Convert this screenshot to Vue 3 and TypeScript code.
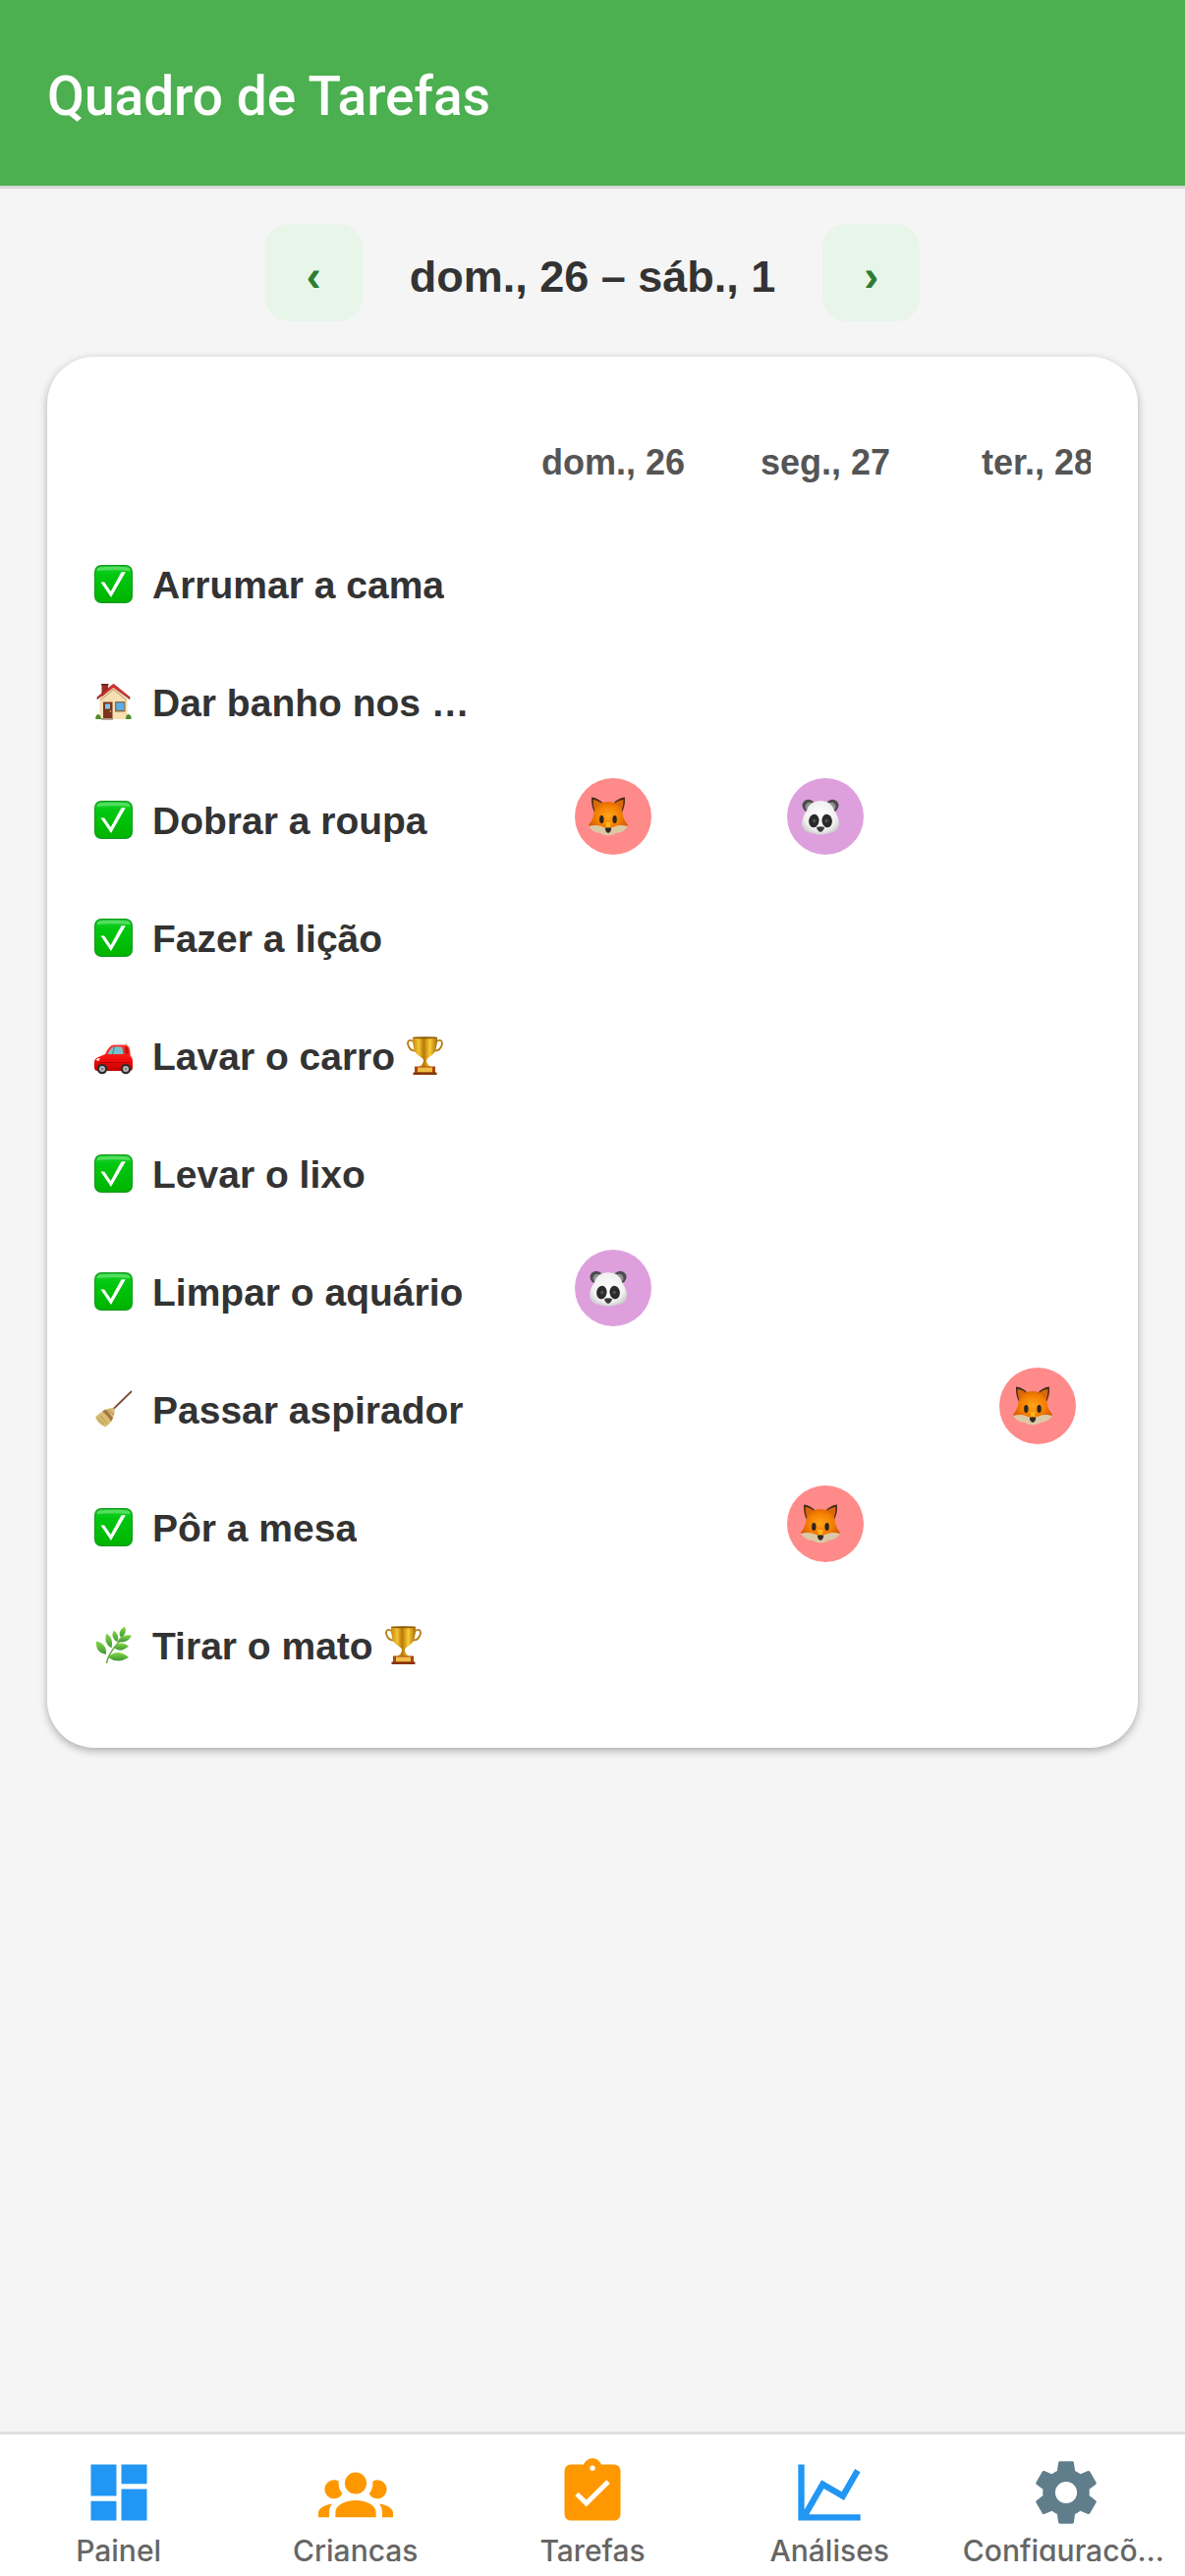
<script setup lang="ts">
import { ref } from 'vue'

type Child = 'fox' | 'panda'
type Glyph = 'check' | 'house' | 'car' | 'broom' | 'herb'

interface Task {
  name: string
  glyph: Glyph
  bonus?: boolean
  days: (Child | null)[]
}

interface Tab {
  label: string
  color: string
  path: string
}

const days = ['dom., 26', 'seg., 27', 'ter., 28']
const weekLabel = ref('dom., 26 – sáb., 1')

const tasks: Task[] = [
  { name: 'Arrumar a cama', glyph: 'check', days: [null, null, null] },
  { name: 'Dar banho nos cachorros', glyph: 'house', days: [null, null, null] },
  { name: 'Dobrar a roupa', glyph: 'check', days: ['fox', 'panda', null] },
  { name: 'Fazer a lição', glyph: 'check', days: [null, null, null] },
  { name: 'Lavar o carro', glyph: 'car', bonus: true, days: [null, null, null] },
  { name: 'Levar o lixo', glyph: 'check', days: [null, null, null] },
  { name: 'Limpar o aquário', glyph: 'check', days: ['panda', null, null] },
  { name: 'Passar aspirador', glyph: 'broom', days: [null, null, 'fox'] },
  { name: 'Pôr a mesa', glyph: 'check', days: [null, 'fox', null] },
  { name: 'Tirar o mato', glyph: 'herb', bonus: true, days: [null, null, null] },
]

const tabs: Tab[] = [
  {
    label: 'Painel',
    color: '#2196f3',
    path: 'M3 3h8.2v10.1H3zM3 14.8h8.2V21H3zM12.8 3H21v6.2h-8.2zM12.8 10.9H21V21h-8.2z',
  },
  {
    label: 'Crianças',
    color: '#ff9800',
    path: 'M12,5.5A3.5,3.5 0 0,1 15.5,9A3.5,3.5 0 0,1 12,12.5A3.5,3.5 0 0,1 8.5,9A3.5,3.5 0 0,1 12,5.5M5,8C5.56,8 6.08,8.15 6.53,8.42C6.38,9.85 6.8,11.27 7.66,12.38C7.16,13.34 6.16,14 5,14A3,3 0 0,1 2,11A3,3 0 0,1 5,8M19,8A3,3 0 0,1 22,11A3,3 0 0,1 19,14C17.84,14 16.84,13.34 16.34,12.38C17.2,11.27 17.62,9.85 17.47,8.42C17.92,8.15 18.44,8 19,8M5.5,18.25C5.5,16.18 8.41,14.5 12,14.5C15.59,14.5 18.5,16.18 18.5,18.25V20H5.5V18.25M0,20V18.5C0,17.11 1.89,15.94 4.45,15.6C3.86,16.28 3.5,17.22 3.5,18.25V20H0M24,20H20.5V18.25C20.5,17.22 20.14,16.28 19.55,15.6C22.11,15.94 24,17.11 24,18.5V20Z',
  },
  {
    label: 'Tarefas',
    color: '#ff9800',
    path: 'M19 3h-4.18C14.4 1.84 13.3 1 12 1s-2.4.84-2.82 2H5a2 2 0 0 0-2 2v14a2 2 0 0 0 2 2h14a2 2 0 0 0 2-2V5a2 2 0 0 0-2-2zM12 3.3a.85.85 0 1 1 0 1.7.85.85 0 0 1 0-1.7zM10 16.6l-3.6-3.6 1.1-1.1 2.5 2.5 6.5-6.45 1.1 1.1z',
  },
  {
    label: 'Análises',
    color: '#2196f3',
    path: 'M16,11.78L20.24,4.45L21.97,5.45L16.74,14.5L10.23,10.75L5.46,19H22V21H2V3H4V17.54L9.5,8L16,11.78Z',
  },
  {
    label: 'Configurações',
    color: '#607d8b',
    path: 'M12,15.5A3.5,3.5 0 0,1 8.5,12A3.5,3.5 0 0,1 12,8.5A3.5,3.5 0 0,1 15.5,12A3.5,3.5 0 0,1 12,15.5M19.43,12.97C19.47,12.65 19.5,12.33 19.5,12C19.5,11.67 19.47,11.34 19.43,11L21.54,9.37C21.73,9.22 21.78,8.95 21.66,8.73L19.66,5.27C19.54,5.05 19.27,4.96 19.05,5.05L16.56,6.05C16.04,5.66 15.5,5.32 14.87,5.07L14.5,2.42C14.46,2.18 14.25,2 14,2H10C9.75,2 9.54,2.18 9.5,2.42L9.13,5.07C8.5,5.32 7.96,5.66 7.44,6.05L4.95,5.05C4.73,4.96 4.46,5.05 4.34,5.27L2.34,8.73C2.21,8.95 2.27,9.22 2.46,9.37L4.57,11C4.53,11.34 4.5,11.67 4.5,12C4.5,12.33 4.53,12.65 4.57,12.97L2.46,14.63C2.27,14.78 2.21,15.05 2.34,15.27L4.34,18.73C4.46,18.95 4.73,19.03 4.95,18.95L7.44,17.94C7.96,18.34 8.5,18.68 9.13,18.93L9.5,21.58C9.54,21.82 9.75,22 10,22H14C14.25,22 14.46,21.82 14.5,21.58L14.87,18.93C15.5,18.67 16.04,18.34 16.56,17.94L19.05,18.95C19.27,19.03 19.54,18.95 19.66,18.73L21.66,15.27C21.78,15.05 21.73,14.78 21.54,14.63L19.43,12.97Z',
  },
]
</script>

<template>
  <div class="app">
    <!-- Shared picture definitions -->
    <svg class="defs" aria-hidden="true">
      <defs>
        <linearGradient id="g-check" x1="0" y1="0" x2="0" y2="1">
          <stop offset="0" stop-color="#1fcf30" />
          <stop offset="0.25" stop-color="#00c80f" />
          <stop offset="1" stop-color="#00b400" />
        </linearGradient>
        <linearGradient id="g-gold" x1="0" y1="0" x2="1" y2="0">
          <stop offset="0" stop-color="#c8860c" />
          <stop offset="0.25" stop-color="#f4c430" />
          <stop offset="0.45" stop-color="#b87808" />
          <stop offset="0.7" stop-color="#f8cc38" />
          <stop offset="1" stop-color="#a86a04" />
        </linearGradient>
        <radialGradient id="g-fox" cx="0.5" cy="0.45" r="0.6">
          <stop offset="0" stop-color="#ffa41c" />
          <stop offset="0.5" stop-color="#f58200" />
          <stop offset="1" stop-color="#cf5200" />
        </radialGradient>
        <radialGradient id="g-panda" cx="0.5" cy="0.45" r="0.6">
          <stop offset="0" stop-color="#ffffff" />
          <stop offset="0.7" stop-color="#f0f0f0" />
          <stop offset="1" stop-color="#c8c8c8" />
        </radialGradient>
        <linearGradient id="g-leaf" x1="0" y1="0" x2="0" y2="1">
          <stop offset="0" stop-color="#86d848" />
          <stop offset="1" stop-color="#3c9632" />
        </linearGradient>
        <linearGradient id="g-car" x1="0" y1="0" x2="0" y2="1">
          <stop offset="0" stop-color="#ff3a30" />
          <stop offset="0.6" stop-color="#f20c0c" />
          <stop offset="1" stop-color="#c00000" />
        </linearGradient>

        <symbol id="s-check" viewBox="0 0 39 39">
          <rect width="39" height="39" rx="7" fill="#109c1c" />
          <rect x="1.2" y="1.2" width="36.6" height="36.6" rx="6" fill="url(#g-check)" />
          <path d="M5 2.600Q19.500 1 34 2.600Q37 4 36 6Q19 4.500 3 6Q2 4 5 2.600z" fill="#7be984" opacity="0.6" />
          <path d="M6.500 17.500h3.700l6.500 9.500L27.500 7.300h4.300L17 33z" fill="#fff" />
        </symbol>

        <symbol id="s-house" viewBox="0 0 39 39">
          <path d="M7.500 1.500h6.500v7l-6.500 6z" fill="#9c2c24" />
          <path d="M7 1h7.500v1.500H7z" fill="#6c2018" />
          <path d="M19.500 4.500L5.500 16.500V37h28V16.500z" fill="#f6dfb2" />
          <path d="M6 17L19.500 6 33 17v1.500L19.500 7.500 6 18.500z" fill="#c9a876" />
          <path d="M19.500 1.200L3 14.500v2.200L19.500 4.600 36 16.700v-2.200z" fill="#e0302a" stroke="#6a1a14" stroke-width="0.6" />
          <rect x="9" y="19.500" width="9.500" height="17.500" fill="#7a3420" />
          <rect x="11" y="21.500" width="5" height="5" fill="#7cc4f0" />
          <circle cx="16.500" cy="29" r="0.800" fill="#f4c860" />
          <rect x="21" y="19" width="10.500" height="10.500" fill="#8c6a48" />
          <rect x="22.300" y="20.300" width="8" height="7.500" fill="#58aee8" />
          <path d="M7 36h12v1.800H7z" fill="#a89888" />
          <path d="M1.300 37Q1 32.500 4 32Q6.500 32.500 7 37zM32 37Q32 32 35 32Q38 33 37.600 37z" fill="#4e8c2c" />
        </symbol>

        <symbol id="s-car" viewBox="0 0 39 39">
          <path d="M32 9l1-1.500" stroke="#444" stroke-width="0.800" />
          <path d="M0 26Q0 22.500 4 21L11 18Q15 9 19.500 8.500H31Q35 8.500 36 13l.8 7Q39 21.500 39 26v6Q39 35 36 35H3Q0 35 0 31z" fill="url(#g-car)" />
          <path d="M13.500 18Q16.500 11 20 10.500h7q2 0 2.500 7.500z" fill="#76c2cc" />
          <path d="M20.500 10.500l-2 7.500" stroke="#3c6c74" stroke-width="0.800" />
          <path d="M31 10.500h2.500l1.500 7h-3z" fill="#c40c0c" />
          <path d="M4 26.500h31" stroke="#b80000" stroke-width="1" />
          <path d="M1.500 24q1-2 4.500-2l-1.500 3z" fill="#fff3e0" />
          <circle cx="8" cy="33" r="5.200" fill="#2c2c2c" />
          <circle cx="8" cy="33" r="3" fill="#b8b8b8" />
          <circle cx="8" cy="33" r="1" fill="#666" />
          <circle cx="32" cy="33" r="5.200" fill="#2c2c2c" />
          <circle cx="32" cy="33" r="3" fill="#b8b8b8" />
          <circle cx="32" cy="33" r="1" fill="#666" />
        </symbol>

        <symbol id="s-trophy" viewBox="0 0 39 39">
          <path d="M8.500 5.500Q2 1.500 2 7.500Q3.500 14.500 9.500 14.500Q13 15 12 18M30.500 5.500Q37 1.500 37 7.500Q35.500 14.500 29.500 14.500Q26 15 27 18" fill="none" stroke="#b87c10" stroke-width="1.800" />
          <path d="M7 .8h25Q32.500 15 26 19.500Q21.500 22 21 24q-.3 4 5 7H13q5.300-3 5-7Q17.500 22 13 19.500Q6.500 15 7 .8z" fill="url(#g-gold)" />
          <ellipse cx="19.500" cy="1.200" rx="12.500" ry="1" fill="#8c5c08" />
          <path d="M9 30.500h21V37H9z" fill="#a8480c" />
          <path d="M12 31.500h15v5H12z" fill="#f0bc48" />
          <path d="M7.500 36.500h24V39h-24z" fill="#86340c" />
        </symbol>

        <symbol id="s-broom" viewBox="0 0 39 39">
          <path d="M37.500 1.500L19.500 19" stroke="#7c5038" stroke-width="1.800" stroke-linecap="round" />
          <path d="M20.500 18.500L17 18Q8 20 1 27.500Q4 35 11.500 37.500Q18 33 20.500 24z" fill="#d8bc72" />
          <path d="M8 21.500Q13 25 17 32l2-3.500Q15 22.500 11.500 19.800z" fill="#a47842" />
          <path d="M3 28l7 7M6 26l7 8M14 20l6 5" stroke="#a88848" stroke-width="0.800" />
        </symbol>

        <symbol id="s-herb" viewBox="0 0 39 39">
          <path d="M12.500 38Q14 27 30 11" fill="none" stroke="#62a83c" stroke-width="1.500" />
          <g fill="url(#g-leaf)">
            <path d="M12 29Q1 27 2 15.500Q13 18 12 29z" />
            <path d="M17.500 22.500Q8.500 17 12.500 7.500Q20 13 17.500 22.500z" />
            <path d="M23.500 16.500Q15.500 11 20 4.500Q26 9 23.500 16.500z" />
            <path d="M27 12Q23 5 31 .5Q34 8 27 12z" />
            <path d="M24 16Q26 8 38 9.500Q34 18 24 16z" />
            <path d="M19.500 22Q26 14 35 20.500Q27 28 19.500 22z" />
            <path d="M14 32Q23 22 35 32Q24 39 14 32z" />
          </g>
        </symbol>

        <symbol id="s-fox" viewBox="0 0 40 40">
          <path d="M3 .5Q10 1 15 7L6 16Q2.500 9 3 .5zM37 .5Q30 1 25 7l9 9Q37.500 9 37 .5z" fill="#4a2c18" />
          <path d="M4.500 3Q10 3.500 14.500 7.500L6.500 16Q4.500 9 4.500 3zM35.500 3Q30 3.500 25.500 7.500L33.500 16Q35.500 9 35.500 3z" fill="#d8680c" />
          <path d="M20 5Q28.500 5 32.500 11.500Q35 16 35.500 21Q37 25.500 40 29Q36 37 20 37T0 29Q3 25.500 4.500 21Q5 16 7.500 11.500Q11.500 5 20 5z" fill="url(#g-fox)" />
          <path d="M0 30Q8 28 14 30.500Q18 32 20 32t6-1.500q6-2.500 14-.5Q36 36.500 28 37Q24 39.500 20 39.500T12 37Q4 36.500 0 30z" fill="#dcc8a4" />
          <path d="M17.500 26h5l-.5 6h-4z" fill="#ffb41c" />
          <ellipse cx="13.300" cy="23" rx="2.200" ry="3.900" fill="#2c2420" />
          <ellipse cx="26.600" cy="23" rx="2.200" ry="3.900" fill="#2c2420" />
          <path d="M16.800 32q3.200-1.500 6.400 0Q23 36 20 37Q17 36 16.800 32z" fill="#302826" />
        </symbol>

        <symbol id="s-panda" viewBox="0 0 40 40">
          <circle cx="7.800" cy="9" r="6.300" fill="#4c4c4c" />
          <circle cx="32.200" cy="9" r="6.300" fill="#4c4c4c" />
          <circle cx="8.800" cy="10" r="4.300" fill="#909090" />
          <circle cx="31.200" cy="10" r="4.300" fill="#909090" />
          <path d="M20 4Q31 4 34 14Q39.500 22 39 29Q37 37 28 37Q24 38.500 20 38.500T12 37Q3 37 1 29Q.5 22 6 14Q9 4 20 4z" fill="url(#g-panda)" />
          <ellipse cx="13.300" cy="24.500" rx="5.200" ry="6.800" fill="#2a2a2a" transform="rotate(8 13.300 24.500)" />
          <ellipse cx="26.700" cy="24.500" rx="5.200" ry="6.800" fill="#2a2a2a" transform="rotate(-8 26.700 24.500)" />
          <circle cx="13.800" cy="24.500" r="1.800" fill="#505050" />
          <circle cx="26.200" cy="24.500" r="1.800" fill="#505050" />
          <path d="M16 31q4-1.500 8 0-.5 3.500-4 5-3.500-1.500-4-5z" fill="#3a3a3a" />
        </symbol>
      </defs>
    </svg>

    <header class="header">
      <h1>Quadro de Tarefas</h1>
    </header>

    <main class="main">
      <div class="week">
        <button type="button" class="step" aria-label="Semana anterior">‹</button>
        <h2 class="range">{{ weekLabel }}</h2>
        <button type="button" class="step" aria-label="Próxima semana">›</button>
      </div>

      <section class="card">
        <div class="scroller">
          <table class="board">
            <colgroup>
              <col class="col-task" />
              <col v-for="day in days" :key="day" class="col-day" />
            </colgroup>
            <thead>
              <tr>
                <td></td>
                <th v-for="day in days" :key="day" scope="col">{{ day }}</th>
              </tr>
            </thead>
            <tbody>
              <tr v-for="task in tasks" :key="task.name">
                <th scope="row">
                  <div class="task">
                    <svg class="glyph" aria-hidden="true"><use :href="'#s-' + task.glyph" /></svg>
                    <span class="name">{{ task.name }}<template v-if="task.bonus">&nbsp;<svg class="glyph bonus" aria-hidden="true"><use href="#s-trophy" /></svg></template></span>
                  </div>
                </th>
                <td v-for="(child, i) in task.days" :key="i">
                  <div v-if="child" class="avatar" :class="child">
                    <svg class="face" aria-hidden="true"><use :href="'#s-' + child" /></svg>
                  </div>
                </td>
              </tr>
            </tbody>
          </table>
        </div>
      </section>
    </main>

    <nav class="tabs">
      <a v-for="tab in tabs" :key="tab.label" href="#" class="tab">
        <svg class="tab-icon" viewBox="0 0 24 24" aria-hidden="true">
          <path :d="tab.path" :fill="tab.color" fill-rule="evenodd" />
        </svg>
        <span class="tab-label">{{ tab.label }}</span>
      </a>
    </nav>
  </div>
</template>

<style>
body {
  margin: 0;
  background: #f5f5f5;
}
</style>

<style scoped>
.app {
  display: flex;
  flex-direction: column;
  min-height: 100vh;
  background: #f5f5f5;
  color: #333;
  font-family: 'Liberation Sans', Arial, sans-serif;
}

.defs {
  position: absolute;
  width: 0;
  height: 0;
}

.header {
  padding: 68px 48px 61px;
  background: #4caf50;
  border-bottom: 3px solid #d8d8d8;
}

h1 {
  margin: 0;
  color: #fff;
  font-family: Roboto, sans-serif;
  font-size: 55px;
  font-weight: 500;
  line-height: 60px;
}

.main {
  flex: 1;
  padding: 36px 48px;
}

.week {
  display: flex;
  justify-content: center;
  align-items: center;
  gap: 48px;
  margin-bottom: 36px;
}

.step {
  width: 99px;
  height: 99px;
  padding: 6px 0 0;
  border: 0;
  border-radius: 24px;
  background: #e8f5e9;
  color: #2e7d32;
  font-family: inherit;
  font-size: 45px;
  font-weight: 700;
}

.range {
  margin: 0;
  padding-top: 8px;
  font-size: 45px;
  font-weight: 700;
  white-space: nowrap;
}

.card {
  padding: 48px;
  border-radius: 48px;
  background: #fff;
  box-shadow: 0 3px 9px rgba(0, 0, 0, 0.3);
}

.scroller {
  overflow-x: auto;
  overflow-y: hidden;
  scrollbar-width: none;
}

.board {
  width: 1068px;
  table-layout: fixed;
  border-collapse: collapse;
}

.col-task {
  width: 420px;
}

.col-day {
  width: 216px;
}

.board tr {
  height: 120px;
}

.board th,
.board td {
  padding: 0;
  vertical-align: middle;
}

thead th {
  color: #555;
  font-size: 36px;
  font-weight: 700;
}

.task {
  display: flex;
  align-items: center;
  gap: 20px;
  padding: 6px 24px 0 0;
  font-size: 39px;
  font-weight: 700;
  line-height: 48px;
  text-align: left;
}

.glyph {
  flex: none;
  width: 39px;
  height: 39px;
}

.bonus {
  vertical-align: -5px;
}

.name {
  min-width: 0;
  padding-top: 4px;
  overflow: hidden;
  text-overflow: ellipsis;
  white-space: nowrap;
}

.avatar {
  display: flex;
  align-items: center;
  box-sizing: border-box;
  width: 78px;
  height: 78px;
  margin: 0 auto;
  padding-left: 14px;
  border-radius: 50%;
}

.fox {
  background: #ff8a8a;
}

.panda {
  background: #dda0dd;
}

.face {
  width: 40px;
  height: 40px;
}

.tabs {
  display: flex;
  background: #fff;
  border-top: 3px solid #e0e0e0;
}

.tab {
  display: flex;
  flex: 1 1 0;
  flex-direction: column;
  align-items: center;
  gap: 6px;
  min-width: 0;
  padding: 21px 15px 15px;
  color: #666;
  text-decoration: none;
}

.tab-icon {
  width: 76px;
  height: 76px;
}

.tab-label {
  max-width: 100%;
  height: 26px;
  overflow: hidden;
  font-family: Inter, sans-serif;
  font-size: 30px;
  font-weight: 500;
  line-height: 30px;
  text-overflow: ellipsis;
  white-space: nowrap;
}
</style>
